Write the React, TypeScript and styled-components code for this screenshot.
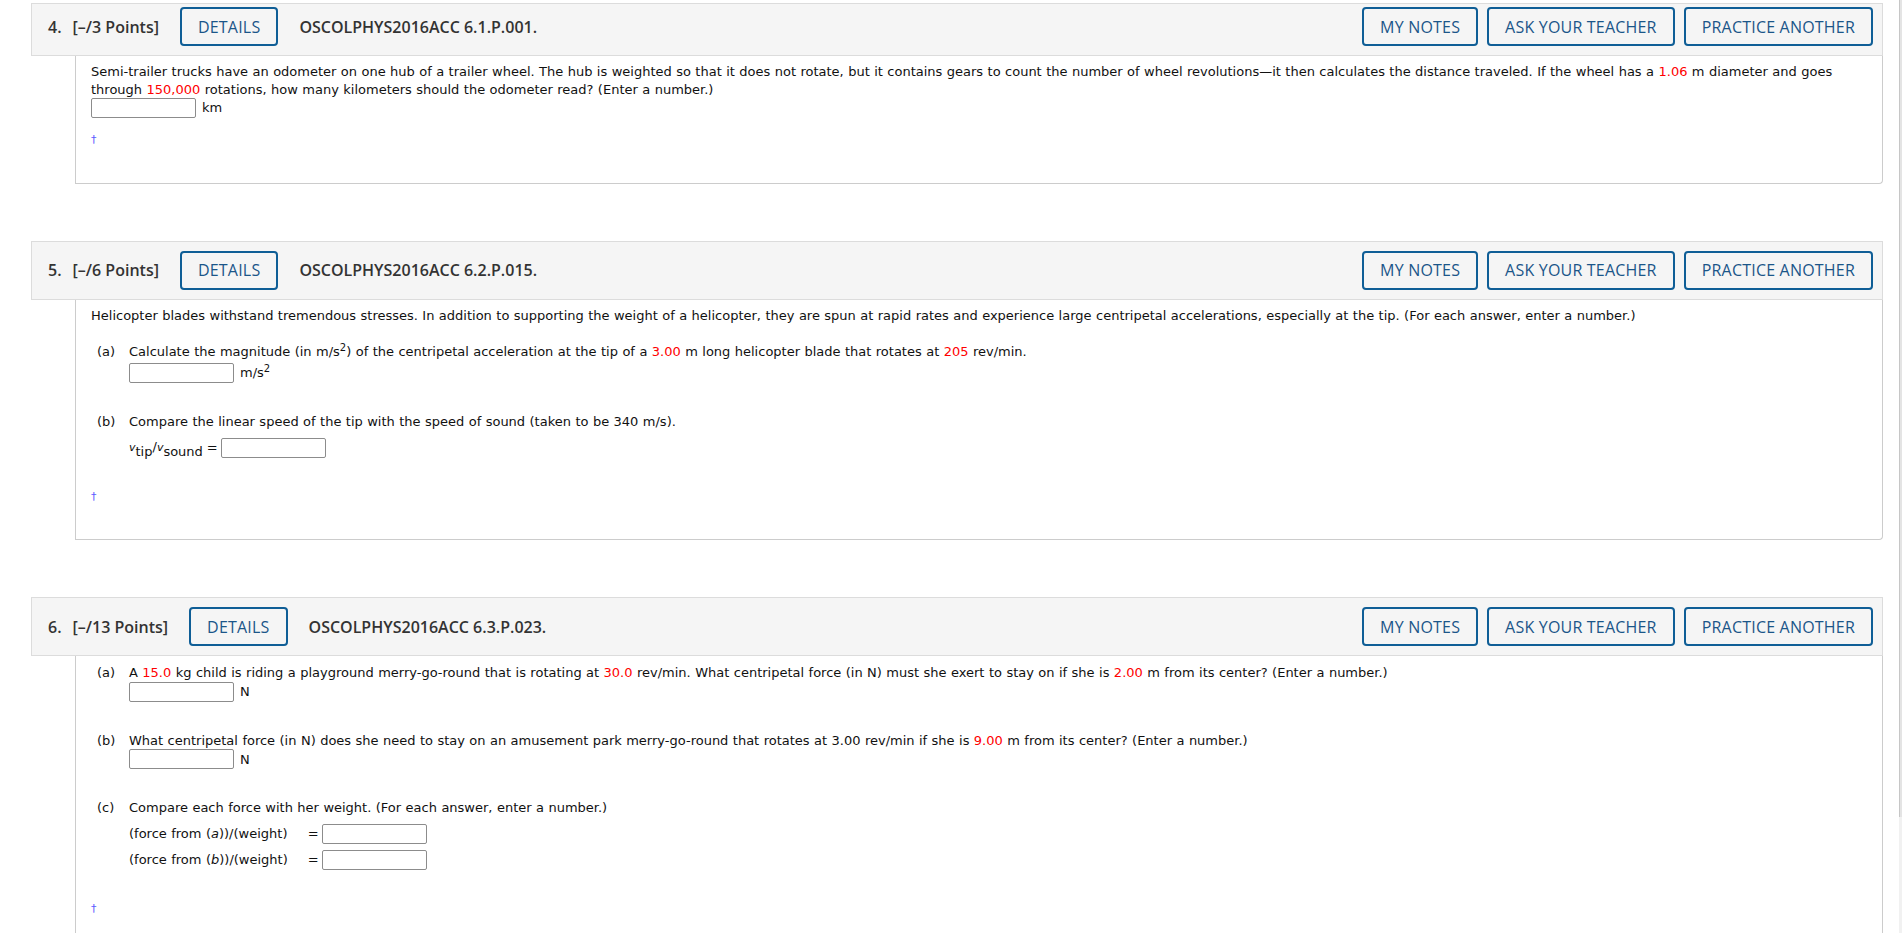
import React from "react";
import styled, { createGlobalStyle } from "styled-components";

const GlobalStyle = createGlobalStyle`
  html, body {
    margin: 0;
    padding: 0;
    overflow: hidden;
    background: #ffffff;
  }
  body {
    font-family: "DejaVu Sans", Verdana, sans-serif;
  }
`;

const Shell = styled.div`
  display: flex;
  width: 1902px;
  height: 933px;
  overflow: hidden;
  background: #ffffff;
`;

const Main = styled.main`
  flex: 1;
  min-width: 0;
  display: flex;
  flex-direction: column;
  gap: 57px;
  padding: 3px 16px 0 31px;
`;

const ScrollStrip = styled.div`
  width: 3px;
  display: flex;
  flex-direction: column;
  background: #f1f1f1;
`;

const ScrollThumb = styled.div`
  height: 817px;
  background: #e4e4e4;
  border-left: 1px solid #c6c6c6;
  box-sizing: border-box;
`;

const Card = styled.section`
  display: flex;
  flex-direction: column;
`;

const Header = styled.header<{ $cut?: boolean }>`
  display: flex;
  align-items: center;
  padding: ${(p) => (p.$cut ? "3px" : "9px")} 9px 9px 16px;
  background: #f5f5f5;
  border: 1px solid #dcdcdc;
  font-family: "Open Sans", "Noto Sans", sans-serif;
  font-size: 16px;
  color: #333333;
`;

const HeaderLeft = styled.div`
  display: flex;
  align-items: center;
`;

const QNumber = styled.span`
  font-weight: 600;
  margin-right: 11px;
`;

const Points = styled.span`
  font-weight: 600;
  margin-right: 21px;
`;

const Code = styled.span`
  font-weight: 600;
  margin-left: 21px;
`;

const HeaderRight = styled.div`
  display: flex;
  align-items: center;
  gap: 9px;
  margin-left: auto;
`;

const OutlineButton = styled.button`
  height: 39px;
  box-sizing: border-box;
  padding: 0 16px;
  border: 2px solid #0f5e96;
  border-radius: 4px;
  background: transparent;
  color: #1b5689;
  font-family: "Open Sans", "Noto Sans", sans-serif;
  font-size: 16px;
  font-weight: 400;
  letter-spacing: 0.2px;
  line-height: 1;
  cursor: pointer;
`;

const Body = styled.div`
  margin-left: 44px;
  border: 1px solid #cccccc;
  border-top: none;
  border-bottom-right-radius: 4px;
  padding: 7px 15px 34px 15px;
  font-family: "DejaVu Sans", Verdana, sans-serif;
  font-size: 13px;
  word-spacing: 0.3px;
  line-height: 17.6px;
  color: #111111;
`;

const Para = styled.p<{ $after?: number }>`
  margin: 0 0 ${(p) => p.$after ?? 0}px 0;
`;

const Red = styled.span`
  color: #ff0000;
`;

const Sup = styled.sup`
  font-size: 10px;
  line-height: 0;
`;

const AnswerRow = styled.div<{ $after?: number; $before?: number }>`
  display: flex;
  align-items: center;
  gap: 6px;
  height: 20px;
  margin-top: ${(p) => p.$before ?? 0}px;
  margin-bottom: ${(p) => p.$after ?? 0}px;
`;

const AnswerBox = styled.input.attrs({ type: "text" })`
  width: 105px;
  height: 20px;
  box-sizing: border-box;
  border: 1px solid #8c8c8c;
  border-radius: 2px;
  background: #ffffff;
  padding: 0 3px;
  margin: 0;
  font-size: 12px;
`;

const Part = styled.div`
  display: grid;
  grid-template-columns: 32px 1fr;
  padding: 1px 0 0 6px;
  margin-bottom: 29px;
`;

const PartLabel = styled.span``;

const PartContent = styled.div`
  display: flex;
  flex-direction: column;
`;

const CompareTable = styled.div`
  display: grid;
  grid-template-columns: max-content max-content max-content;
  grid-auto-rows: 22px;
  row-gap: 4px;
  align-items: center;
  margin-top: 6px;
`;

const CompareLabel = styled.span``;

const Equals = styled.span<{ $wide?: boolean }>`
  padding: ${(p) => (p.$wide ? "0 3px 0 20px" : "0 3px 0 4px")};
`;

const Var = styled.i`
  font-size: 11px;
`;

const Sub = styled.span`
  position: relative;
  top: 5px;
`;

const Dagger = styled.a`
  display: block;
  color: #5b5bff;
  font-size: 11px;
  line-height: 17.6px;
  text-decoration: none;
  width: max-content;
`;

type HeadProps = {
  num: string;
  points: string;
  code: string;
  cut?: boolean;
};

const QuestionHeader: React.FC<HeadProps> = ({ num, points, code, cut }) => (
  <Header $cut={cut}>
    <HeaderLeft>
      <QNumber>{num}</QNumber>
      <Points>{points}</Points>
      <OutlineButton>DETAILS</OutlineButton>
      <Code>{code}</Code>
    </HeaderLeft>
    <HeaderRight>
      <OutlineButton>MY NOTES</OutlineButton>
      <OutlineButton>ASK YOUR TEACHER</OutlineButton>
      <OutlineButton>PRACTICE ANOTHER</OutlineButton>
    </HeaderRight>
  </Header>
);

export default function App() {
  return (
    <>
      <GlobalStyle />
      <Shell>
        <Main>
          <Card>
            <QuestionHeader num="4." points="[–/3 Points]" code="OSCOLPHYS2016ACC 6.1.P.001." cut />
            <Body>
              <Para>
                Semi-trailer trucks have an odometer on one hub of a trailer wheel. The hub is weighted so that it does not
                rotate, but it contains gears to count the number of wheel revolutions—it then calculates the distance
                traveled. If the wheel has a <Red>1.06</Red> m diameter and goes through <Red>150,000</Red> rotations, how
                many kilometers should the odometer read? (Enter a number.)
              </Para>
              <AnswerRow $after={13}>
                <AnswerBox />
                <span>km</span>
              </AnswerRow>
              <Dagger href="#">†</Dagger>
            </Body>
          </Card>

          <Card>
            <QuestionHeader num="5." points="[–/6 Points]" code="OSCOLPHYS2016ACC 6.2.P.015." />
            <Body>
              <Para $after={18}>
                Helicopter blades withstand tremendous stresses. In addition to supporting the weight of a helicopter, they
                are spun at rapid rates and experience large centripetal accelerations, especially at the tip. (For each
                answer, enter a number.)
              </Para>
              <Part>
                <PartLabel>(a)</PartLabel>
                <PartContent>
                  <Para>
                    Calculate the magnitude (in m/s<Sup>2</Sup>) of the centripetal acceleration at the tip of a{" "}
                    <Red>3.00</Red> m long helicopter blade that rotates at <Red>205</Red> rev/min.
                  </Para>
                  <AnswerRow $before={2}>
                    <AnswerBox />
                    <span>
                      m/s<Sup>2</Sup>
                    </span>
                  </AnswerRow>
                </PartContent>
              </Part>
              <Part>
                <PartLabel>(b)</PartLabel>
                <PartContent>
                  <Para>Compare the linear speed of the tip with the speed of sound (taken to be 340 m/s).</Para>
                  <CompareTable>
                    <CompareLabel>
                      <Var>v</Var>
                      <Sub>tip</Sub>/<Var>v</Var>
                      <Sub>sound</Sub>
                    </CompareLabel>
                    <Equals>=</Equals>
                    <AnswerBox />
                  </CompareTable>
                </PartContent>
              </Part>
              <Dagger href="#">†</Dagger>
            </Body>
          </Card>

          <Card>
            <QuestionHeader num="6." points="[–/13 Points]" code="OSCOLPHYS2016ACC 6.3.P.023." />
            <Body>
              <Part>
                <PartLabel>(a)</PartLabel>
                <PartContent>
                  <Para>
                    A <Red>15.0</Red> kg child is riding a playground merry-go-round that is rotating at <Red>30.0</Red>{" "}
                    rev/min. What centripetal force (in N) must she exert to stay on if she is <Red>2.00</Red> m from its
                    center? (Enter a number.)
                  </Para>
                  <AnswerRow>
                    <AnswerBox />
                    <span>N</span>
                  </AnswerRow>
                </PartContent>
              </Part>
              <Part>
                <PartLabel>(b)</PartLabel>
                <PartContent>
                  <Para>
                    What centripetal force (in N) does she need to stay on an amusement park merry-go-round that rotates at
                    3.00 rev/min if she is <Red>9.00</Red> m from its center? (Enter a number.)
                  </Para>
                  <AnswerRow>
                    <AnswerBox />
                    <span>N</span>
                  </AnswerRow>
                </PartContent>
              </Part>
              <Part>
                <PartLabel>(c)</PartLabel>
                <PartContent>
                  <Para>Compare each force with her weight. (For each answer, enter a number.)</Para>
                  <CompareTable>
                    <CompareLabel>
                      (force from (<i>a</i>))/(weight)
                    </CompareLabel>
                    <Equals $wide>=</Equals>
                    <AnswerBox />
                    <CompareLabel>
                      (force from (<i>b</i>))/(weight)
                    </CompareLabel>
                    <Equals $wide>=</Equals>
                    <AnswerBox />
                  </CompareTable>
                </PartContent>
              </Part>
              <Dagger href="#">†</Dagger>
            </Body>
          </Card>
        </Main>
        <ScrollStrip>
          <ScrollThumb />
        </ScrollStrip>
      </Shell>
    </>
  );
}
